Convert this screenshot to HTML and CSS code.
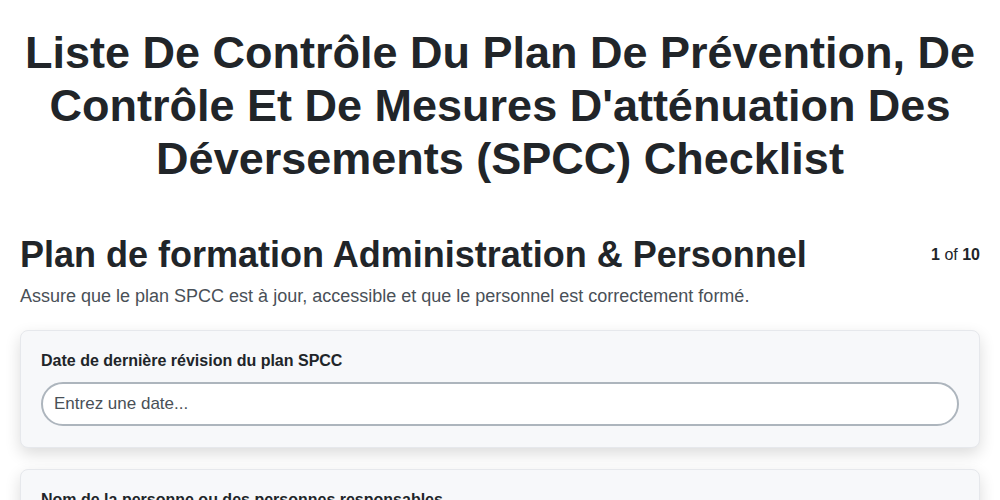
FILE: index.html
```html
<!DOCTYPE html>
<html lang="fr">
<head>
<meta charset="utf-8">
<title>SPCC Checklist</title>
<link rel="stylesheet" href="styles.css">
</head>
<body>
<div class="page">
  <h1 class="title">Liste De Contrôle Du Plan De Prévention, De Contrôle Et De Mesures D'atténuation Des Déversements (SPCC) Checklist</h1>
  <div class="section-head">
    <h2 class="section-title">Plan de formation Administration &amp; Personnel</h2>
    <div class="pager"><b>1</b> of <b>10</b></div>
  </div>
  <p class="section-desc">Assure que le plan SPCC est à jour, accessible et que le personnel est correctement formé.</p>
  <div class="cards">
    <div class="card">
      <label class="field-label">Date de dernière révision du plan SPCC</label>
      <input class="field-input" type="text" placeholder="Entrez une date...">
    </div>
    <div class="card">
      <label class="field-label">Nom de la personne ou des personnes responsables</label>
      <input class="field-input" type="text" placeholder="Entrez un nom...">
    </div>
  </div>
</div>
</body>
</html>
```
FILE: styles.css
```css
* { box-sizing: border-box; }
html, body { margin: 0; padding: 0; background: #ffffff; }
body {
  font-family: "Liberation Sans", Arial, sans-serif;
  color: #212529;
}
.page {
  padding: 26px 20px 20px;
}
.title {
  margin: 0 0 48px;
  font-size: 45px;
  line-height: 53px;
  font-weight: 700;
  text-align: center;
  color: #212529;
}
.section-head {
  display: flex;
  justify-content: space-between;
  align-items: center;
}
.section-title {
  margin: 0;
  font-size: 36px;
  line-height: 44px;
  font-weight: 700;
  color: #212529;
}
.pager {
  font-size: 16px;
  line-height: 20px;
  color: #212529;
}
.section-desc {
  margin: 6px 0 20px;
  font-size: 18px;
  line-height: 27px;
  color: #495057;
}
.cards {
  display: flex;
  flex-direction: column;
  gap: 21px;
}
.card {
  background: #f7f8fa;
  border: 1px solid #e6e8ec;
  border-radius: 8px;
  padding: 20px 20px 21px;
  box-shadow: 0 6px 16px rgba(0, 0, 0, 0.14);
  display: flex;
  flex-direction: column;
}
.field-label {
  font-size: 16px;
  line-height: 20px;
  font-weight: 700;
  color: #212529;
  margin-bottom: 11px;
}
.field-input {
  height: 44px;
  border: 2px solid #adb5bd;
  border-radius: 22px;
  background: #ffffff;
  padding: 0 11px;
  font-family: "Liberation Sans", Arial, sans-serif;
  font-size: 17px;
  color: #212529;
  outline: none;
}
.field-input::placeholder { color: #495057; opacity: 1; }
```
